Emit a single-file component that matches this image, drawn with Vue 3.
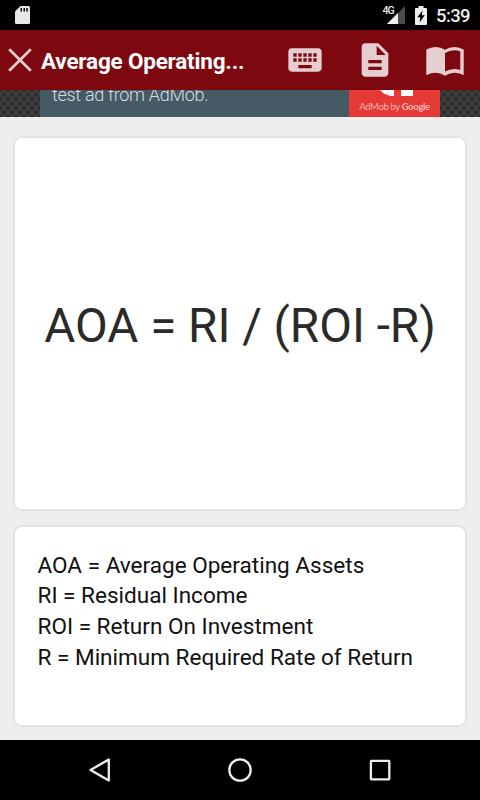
<script setup>
    import { ref } from 'vue'

    const title = ref('Average Operating...')
    const formula = ref('AOA = RI / (ROI -R)')
    const definitions = ref([
        'AOA = Average Operating Assets',
        'RI = Residual Income',
        'ROI = Return On Investment',
        'R = Minimum Required Rate of Return',
    ])
</script>

<template>
    <div class="screen">
        <div class="status-bar">
            <svg class="sd-card" width="15" height="18" viewBox="0 0 15 18">
                <path d="M5.5 0H13.5Q15 0 15 1.5V16.5Q15 18 13.5 18H1.5Q0 18 0 16.5V5.5Z" fill="#e8e8e8" />
                <path d="M5.5 2h1.5v3.5H5.5zM8.5 2H10v3.5H8.5zM11.3 2h1.5v3.5h-1.5z" fill="#000" />
            </svg>
            <div class="status-right">
                <span class="network">4G</span>
                <svg class="signal" width="18" height="18" viewBox="0 0 18 18">
                    <path d="M18 0V18H0Z" fill="#4a4a4a" />
                    <path d="M11 7V18H0Z" fill="#efefef" />
                </svg>
                <svg class="battery" width="12" height="19" viewBox="0 0 12 19">
                    <path d="M3.5 0h5v2H11q1 0 1 1v15q0 1-1 1H1q-1 0-1-1V3q0-1 1-1h2.5z" fill="#efefef" />
                    <path d="M7.5 4.5L2.3 11.3H5.3L4.6 16.5L9.8 9.3H6.8Z" fill="#000" />
                </svg>
                <span class="clock">5:39</span>
            </div>
        </div>

        <div class="toolbar">
            <svg class="close" width="24" height="24" viewBox="0 0 24 24">
                <path d="M1.2 1.2L22.8 22.8M22.8 1.2L1.2 22.8" stroke="#e5cdd0" stroke-width="2.7" />
            </svg>
            <h1>{{ title }}</h1>
            <div class="actions">
                <svg width="40" height="40" viewBox="0 0 24 24">
                    <path d="M20 5H4c-1.1 0-1.99.9-1.99 2L2 17c0 1.1.9 2 2 2h16c1.1 0 2-.9 2-2V7c0-1.1-.9-2-2-2zm-9 3h2v2h-2V8zm0 3h2v2h-2v-2zM8 8h2v2H8V8zm0 3h2v2H8v-2zm-1 2H5v-2h2v2zm0-3H5V8h2v2zm9 7H8v-2h8v2zm0-4h-2v-2h2v2zm0-3h-2V8h2v2zm3 3h-2v-2h2v2zm0-3h-2V8h2v2z" />
                </svg>
                <svg width="40" height="40" viewBox="0 0 24 24">
                    <path d="M14 2H6c-1.1 0-1.99.9-1.99 2L4 20c0 1.1.89 2 1.99 2H18c1.1 0 2-.9 2-2V8l-6-6zm2 16H8v-2h8v2zm0-4H8v-2h8v2zm-3-5V3.5L18.5 9H13z" />
                </svg>
                <svg width="40" height="40" viewBox="0 0 40 40">
                    <path fill-rule="evenodd" d="M1.3 9.5Q5.5 7 10.5 7Q16 7 20 9.8Q24 7 29.5 7Q34.5 7 38.7 9.5V35H38Q34 32.8 29.5 32.8Q24.5 32.8 20 35.7Q15.5 32.8 10.5 32.8Q6 32.8 2 35H1.3ZM20 13V31.5Q24.5 29 29.5 29Q32.5 29 35.3 30V11.3Q32.5 10.2 29.5 10.2Q24.5 10.2 20 13Z" />
                </svg>
            </div>
        </div>

        <!-- the banner is scrolled half way under the toolbar -->
        <div class="ad-strip">
            <div class="ad">
                <div class="ad-text">test ad from AdMob.</div>
                <div class="ad-brand">
                    <svg width="91" height="8" viewBox="0 0 91 8">
                        <path d="M31 0H45V6Q36 6 31 0ZM52 0H64V6H52Z" fill="#fff" />
                    </svg>
                    <span>AdMob by <b>Google</b></span>
                </div>
            </div>
        </div>

        <div class="content">
            <div class="card formula-card">
                <div class="formula">{{ formula }}</div>
            </div>
            <div class="card legend-card">
                <div v-for="line in definitions" :key="line" class="legend-line">{{ line }}</div>
            </div>
        </div>

        <div class="nav-bar">
            <svg width="24" height="26" viewBox="0 0 24 26">
                <path d="M20.8 2.5V23.5L2.5 13Z" />
            </svg>
            <svg width="24" height="26" viewBox="0 0 24 26">
                <circle cx="12" cy="13" r="10.7" />
            </svg>
            <svg width="24" height="26" viewBox="0 0 24 26">
                <rect x="2.9" y="3.9" width="18.4" height="18.4" rx="0.5" />
            </svg>
        </div>
    </div>
</template>

<style>
    body {
        margin: 0;
        overflow: hidden;
    }
</style>

<style scoped>
    .screen {
        width: 480px;
        height: 800px;
        display: flex;
        flex-direction: column;
        overflow: hidden;
        background-color: #eeeeee;
        font-family: Roboto, sans-serif;
    }

    .screen svg {
        display: block;
        flex-shrink: 0;
    }

    .status-bar {
        height: 30px;
        box-sizing: border-box;
        padding: 0 10px 0 15px;
        display: flex;
        justify-content: space-between;
        align-items: center;
        background-color: #000;
        color: #eee;
    }

    .status-right {
        display: flex;
        align-items: center;
    }

    .network {
        margin-right: -7px;
        padding-bottom: 9px;
        font-size: 10.5px;
        line-height: 12px;
        font-weight: 500;
        letter-spacing: -0.8px;
    }

    .battery {
        margin: 0 9px 0 10px;
    }

    .clock {
        padding-top: 2px;
        font-size: 18.5px;
        line-height: 24px;
        font-weight: 500;
        letter-spacing: -0.6px;
    }

    .toolbar {
        height: 60px;
        box-sizing: border-box;
        padding: 0 15px 0 8px;
        display: flex;
        align-items: center;
        background-color: #7d0810;
    }

    .toolbar h1 {
        margin: 0 0 0 9px;
        padding-top: 2px;
        color: #fff;
        font-size: 22.5px;
        line-height: 28px;
        font-weight: 700;
        letter-spacing: -0.2px;
        white-space: nowrap;
    }

    .actions {
        margin-left: auto;
        display: flex;
        gap: 30px;
        fill: #e5cdd0;
    }

    .ad-strip {
        height: 27px;
        display: flex;
        justify-content: center;
        overflow: hidden;
        background-color: #404040;
        background-image: radial-gradient(circle, #2c2c2c 1.5px, transparent 3px), radial-gradient(circle, #2c2c2c 1.5px, transparent 3px);
        background-size: 8px 9px;
        background-position: 0 0, 4px 4.5px;
    }

    .ad {
        width: 400px;
        display: flex;
        background-color: #455a64;
    }

    .ad-text {
        flex: 1;
        padding-left: 12px;
        margin-top: -6px;
        color: #d9dfe2;
        font-size: 18px;
        line-height: 22px;
        font-weight: 300;
        letter-spacing: -0.3px;
        white-space: nowrap;
    }

    .ad-brand {
        width: 91px;
        background-color: #e53935;
        color: #f8b4b0;
        font-family: Lato, sans-serif;
        font-size: 9.5px;
        line-height: 18px;
        letter-spacing: -0.35px;
        text-align: center;
        white-space: nowrap;
    }

    .content {
        flex: 1;
        padding: 19px 13px 13px;
        display: flex;
        flex-direction: column;
        gap: 14px;
    }

    .card {
        box-sizing: border-box;
        border: 2px solid #e3e3e3;
        border-radius: 9px;
        background-color: #fff;
    }

    .formula-card {
        height: 375px;
        display: flex;
        justify-content: center;
        align-items: center;
    }

    .formula {
        padding-top: 5px;
        color: #2a2a2a;
        font-size: 47.6px;
        line-height: 56px;
        white-space: nowrap;
    }

    .legend-card {
        height: 202px;
        padding: 23.5px 22.5px;
        color: #111;
        font-size: 22.55px;
    }

    .legend-line {
        line-height: 30.7px;
        white-space: nowrap;
    }

    .nav-bar {
        height: 60px;
        display: flex;
        justify-content: center;
        align-items: center;
        gap: 116px;
        background-color: #000;
        fill: none;
        stroke: #eee;
        stroke-width: 2.3;
        stroke-linejoin: round;
    }
</style>
